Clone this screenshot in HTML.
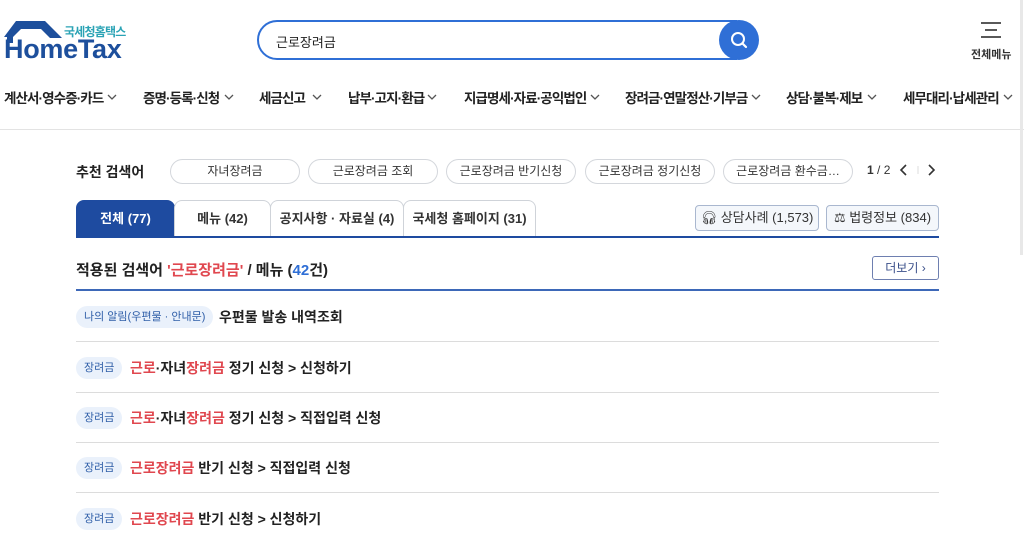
<!DOCTYPE html>
<html><head><meta charset="utf-8"><style>
*{margin:0;padding:0;box-sizing:border-box}
body{width:1024px;height:543px;overflow:hidden;background:#fff;font-family:"Liberation Sans","Noto Sans CJK KR",sans-serif;color:#222;position:relative}
.a{position:absolute;white-space:nowrap}
.nav{top:87px;font-size:13.5px;font-weight:bold;color:#222;letter-spacing:-0.9px}
.chev{top:94px}
.chip{top:159px;height:25px;border:1px solid #d4d7dc;border-radius:13px;font-size:12px;color:#333;text-align:center;line-height:23px}
.tab{top:200px;height:38px;border:1px solid #cfd3d9;border-bottom:none;border-radius:8px 8px 0 0;font-size:13px;font-weight:bold;color:#333;text-align:center;line-height:36px;background:#fff}
.btn{top:205px;height:26px;border:1px solid #a9b7cf;border-radius:4px;background:#f4f7fb;font-size:13px;color:#333;text-align:center;line-height:24px}
.sep{left:76px;width:863px;height:1px;background:#dcdcdc}
.badge{left:76px;height:22px;border-radius:11px;background:#eaf1fb;color:#2f5ea8;font-size:11px;line-height:22px;padding:0 8px}
.row{left:130px;font-size:14px;font-weight:bold;color:#222}
.r{color:#e0474f;font-weight:bold}
</style></head><body>
<svg class="a" style="left:3px;top:21px" width="60" height="22" viewBox="0 0 60 22"><path d="M13 0 H42 L59 17 H47 L38 8 H18 L10 16 V22 H4 V16 H1 Z" fill="#1d4f9c"/></svg>
<div class="a" style="left:4px;top:34px;font-size:27px;font-weight:bold;color:#1d4f9c;letter-spacing:-0.3px">HomeTax</div>
<div class="a" style="left:64px;top:23px;font-size:12px;color:#2aa3b5;font-weight:bold;letter-spacing:-0.8px">국세청홈택스</div>
<div class="a" style="left:257px;top:20px;width:480px;height:40px;border:2.5px solid #2f6fd6;border-radius:20px 0 0 20px;"></div>
<div class="a" style="left:276px;top:32px;font-size:13px;color:#222">근로장려금</div>
<div class="a" style="left:719px;top:20px;width:40px;height:40px;border-radius:50%;background:#2f6fd6"></div>
<svg class="a" style="left:729px;top:30px" width="20" height="20" viewBox="0 0 20 20"><circle cx="9" cy="9" r="6" fill="none" stroke="#fff" stroke-width="2"/><path d="M13.5 13.5 L17 17" stroke="#fff" stroke-width="2.2" stroke-linecap="round"/></svg>
<svg class="a" style="left:980px;top:21px" width="22" height="18"><path d="M1 2H21M5 9H17M1 16H21" stroke="#222" stroke-width="1.6"/></svg>
<div class="a" style="left:971px;top:46px;font-size:11px;color:#333;font-weight:bold">전체메뉴</div>
<div class="a nav" style="left:4px">계산서·영수증·카드</div>
<div class="a nav" style="left:143px">증명·등록·신청</div>
<div class="a nav" style="left:259px">세금신고</div>
<div class="a nav" style="left:348px">납부·고지·환급</div>
<div class="a nav" style="left:464px">지급명세·자료·공익법인</div>
<div class="a nav" style="left:625px">장려금·연말정산·기부금</div>
<div class="a nav" style="left:786px">상담·불복·제보</div>
<div class="a nav" style="left:903px">세무대리·납세관리</div>
<svg class="a chev" style="left:107px" width="10" height="6"><path d="M1 1L5 5L9 1" stroke="#555" fill="none" stroke-width="1.3"/></svg>
<svg class="a chev" style="left:224px" width="10" height="6"><path d="M1 1L5 5L9 1" stroke="#555" fill="none" stroke-width="1.3"/></svg>
<svg class="a chev" style="left:312px" width="10" height="6"><path d="M1 1L5 5L9 1" stroke="#555" fill="none" stroke-width="1.3"/></svg>
<svg class="a chev" style="left:427px" width="10" height="6"><path d="M1 1L5 5L9 1" stroke="#555" fill="none" stroke-width="1.3"/></svg>
<svg class="a chev" style="left:590px" width="10" height="6"><path d="M1 1L5 5L9 1" stroke="#555" fill="none" stroke-width="1.3"/></svg>
<svg class="a chev" style="left:751px" width="10" height="6"><path d="M1 1L5 5L9 1" stroke="#555" fill="none" stroke-width="1.3"/></svg>
<svg class="a chev" style="left:867px" width="10" height="6"><path d="M1 1L5 5L9 1" stroke="#555" fill="none" stroke-width="1.3"/></svg>
<svg class="a chev" style="left:1003px" width="10" height="6"><path d="M1 1L5 5L9 1" stroke="#555" fill="none" stroke-width="1.3"/></svg>
<div class="a" style="left:0;top:129px;width:1024px;height:1px;background:#e3e3e3"></div>
<div class="a" style="left:1020px;top:0;width:3px;height:255px;background:#e8e8e8"></div>
<div class="a" style="left:76px;top:162px;font-size:14px;font-weight:bold">추천 검색어</div>
<div class="a chip" style="left:170px;width:130px">자녀장려금</div>
<div class="a chip" style="left:308px;width:130px">근로장려금 조회</div>
<div class="a chip" style="left:446px;width:130px">근로장려금 반기신청</div>
<div class="a chip" style="left:585px;width:130px">근로장려금 정기신청</div>
<div class="a chip" style="left:723px;width:130px">근로장려금 환수금…</div>
<div class="a" style="left:867px;top:163px;font-size:12px;color:#333"><b>1</b> / 2</div>
<svg class="a" style="left:898px;top:164px" width="40" height="12"><path d="M8 1L3 6L8 11" stroke="#333" fill="none" stroke-width="1.6"/><path d="M20 2V10" stroke="#ddd"/><path d="M31 1L36 6L31 11" stroke="#333" fill="none" stroke-width="1.6"/></svg>
<div class="a tab" style="left:76px;width:99px;background:#1e4ba0;border-color:#1e4ba0;color:#fff">전체 (77)</div>
<div class="a tab" style="left:174px;width:97px">메뉴 (42)</div>
<div class="a tab" style="left:270px;width:134px">공지사항 · 자료실 (4)</div>
<div class="a tab" style="left:403px;width:133px">국세청 홈페이지 (31)</div>
<div class="a btn" style="left:695px;width:124px">🎧︎ 상담사례 (1,573)</div>
<div class="a btn" style="left:826px;width:113px">⚖︎ 법령정보 (834)</div>
<div class="a" style="left:76px;top:236px;width:863px;height:2px;background:#1e4ba0"></div>
<div class="a" style="left:76px;top:259px;font-size:15px;font-weight:bold">적용된 검색어 <span class="r">'근로장려금'</span> / 메뉴 (<span style="color:#2f6fd6">42</span>건)</div>
<div class="a" style="left:872px;top:256px;width:67px;height:24px;border:1px solid #6e7fb0;border-radius:3px;font-size:12px;color:#3a4f8a;line-height:22px;text-align:center">더보기 ›</div>
<div class="a" style="left:76px;top:289px;width:863px;height:2px;background:#3d68b8"></div>
<div class="a badge" style="top:306px">나의 알림(우편물 · 안내문)</div>
<div class="a row" style="left:219px;top:307px">우편물 발송 내역조회</div>
<div class="a sep" style="top:341px"></div>
<div class="a badge" style="top:357px">장려금</div>
<div class="a row" style="top:358px"><span class="r">근로</span>·자녀<span class="r">장려금</span> 정기 신청 &gt; 신청하기</div>
<div class="a sep" style="top:392px"></div>
<div class="a badge" style="top:407px">장려금</div>
<div class="a row" style="top:408px"><span class="r">근로</span>·자녀<span class="r">장려금</span> 정기 신청 &gt; 직접입력 신청</div>
<div class="a sep" style="top:442px"></div>
<div class="a badge" style="top:457px">장려금</div>
<div class="a row" style="top:458px"><span class="r">근로장려금</span> 반기 신청 &gt; 직접입력 신청</div>
<div class="a sep" style="top:492px"></div>
<div class="a badge" style="top:508px">장려금</div>
<div class="a row" style="top:509px"><span class="r">근로장려금</span> 반기 신청 &gt; 신청하기</div>
</body></html>
